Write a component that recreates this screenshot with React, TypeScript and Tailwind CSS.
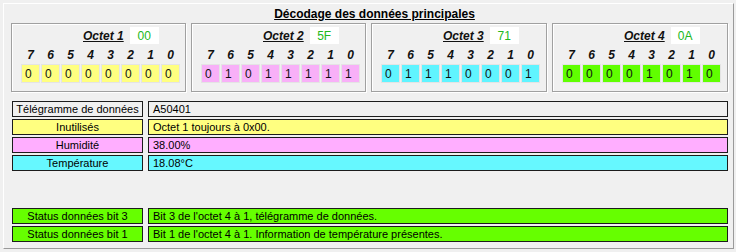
import React from "react";

type Octet = {
  name: string;
  hex: string;
  bits: string[];
  cell: string;
  width: string;
};

const octets: Octet[] = [
  { name: "Octet 1", hex: "00", bits: ["0", "0", "0", "0", "0", "0", "0", "0"], cell: "bg-[#ffff80]", width: "w-[175px]" },
  { name: "Octet 2", hex: "5F", bits: ["0", "1", "0", "1", "1", "1", "1", "1"], cell: "bg-[#f8b0f8]", width: "w-[175px]" },
  { name: "Octet 3", hex: "71", bits: ["0", "1", "1", "1", "0", "0", "0", "1"], cell: "bg-[#60f4ff]", width: "w-[176px]" },
  { name: "Octet 4", hex: "0A", bits: ["0", "0", "0", "0", "1", "0", "1", "0"], cell: "bg-[#60ff00]", width: "w-[176px]" },
];

const rows = [
  { label: "Télégramme de données", value: "A50401", bg: "bg-[#f0f0f0]" },
  { label: "Inutilisés", value: "Octet 1 toujours à 0x00.", bg: "bg-[#ffff80]" },
  { label: "Humidité", value: "38.00%", bg: "bg-[#ffaeff]" },
  { label: "Température", value: "18.08°C", bg: "bg-[#66f8ff]" },
];

const status = [
  { label: "Status données bit 3", value: "Bit 3 de l'octet 4 à 1, télégramme de données." },
  { label: "Status données bit 1", value: "Bit 1 de l'octet 4 à 1. Information de température présentes." },
];

function OctetBox({ o }: { o: Octet }) {
  return (
    <div className={`${o.width} h-[69px] border border-[#a0a0a0] shadow-[inset_1px_1px_0_#ffffff,1px_1px_0_#ffffff] pt-[3px]`}>
      <div className="flex items-center h-[17px] pl-[71px]">
        <span className="font-bold italic underline text-[12px] leading-none text-[#111]">{o.name}</span>
        <span className="ml-[6px] w-[29px] h-[17px] bg-white flex items-center justify-center text-[12px] text-[#20b820]">
          {o.hex}
        </span>
      </div>
      <div className="flex gap-[3px] pl-[10px] mt-[2px] h-[18px] items-center">
        {["7", "6", "5", "4", "3", "2", "1", "0"].map((d) => (
          <span key={d} className="w-[17px] text-center font-bold italic text-[12px] leading-none text-[#111]">
            {d}
          </span>
        ))}
      </div>
      <div className="flex gap-[3px] pl-[10px] mt-[1px]">
        {o.bits.map((b, i) => (
          <span
            key={i}
            className={`${o.cell} w-[17px] h-[17px] outline outline-1 outline-[#e4e4e4] flex items-center pl-[3px] text-[12px] text-[#111]`}
          >
            {b}
          </span>
        ))}
      </div>
    </div>
  );
}

function Row({ label, value, bg }: { label: string; value: string; bg: string }) {
  return (
    <div className="flex gap-[5px] h-[16px]">
      <div className={`${bg} w-[131px] border border-[#1c1c1c] flex items-center justify-center text-[11px] leading-none whitespace-nowrap`}>
        {label}
      </div>
      <div className={`${bg} w-[580px] border border-[#1c1c1c] flex items-center pl-[4px] text-[11px] leading-none whitespace-nowrap`}>
        {value}
      </div>
    </div>
  );
}

export default function App() {
  return (
    <div
      className="w-[736px] h-[252px] bg-[#f0f0f0] pt-[3px] pl-[3px] text-black"
      style={{ fontFamily: '"Liberation Sans", Arial, sans-serif' }}
    >
      <div className="w-[731px] h-[246px] border border-t-white border-l-white border-r-[#9a9a9a] border-b-[#9a9a9a]">
        <div className="h-[19px] flex items-center justify-center pl-[12px]">
          <span className="font-bold underline text-[12px] leading-none">Décodage des données principales</span>
        </div>

        <div className="flex gap-[5px] pl-[7px]">
          {octets.map((o) => (
            <OctetBox key={o.name} o={o} />
          ))}
        </div>

        <div className="flex flex-col gap-[2px] pl-[8px] mt-[9px]">
          {rows.map((r) => (
            <Row key={r.label} {...r} />
          ))}
        </div>

        <div className="flex flex-col gap-[2px] pl-[8px] mt-[37px]">
          {status.map((s) => (
            <Row key={s.label} label={s.label} value={s.value} bg="bg-[#66ff00]" />
          ))}
        </div>
      </div>
    </div>
  );
}
